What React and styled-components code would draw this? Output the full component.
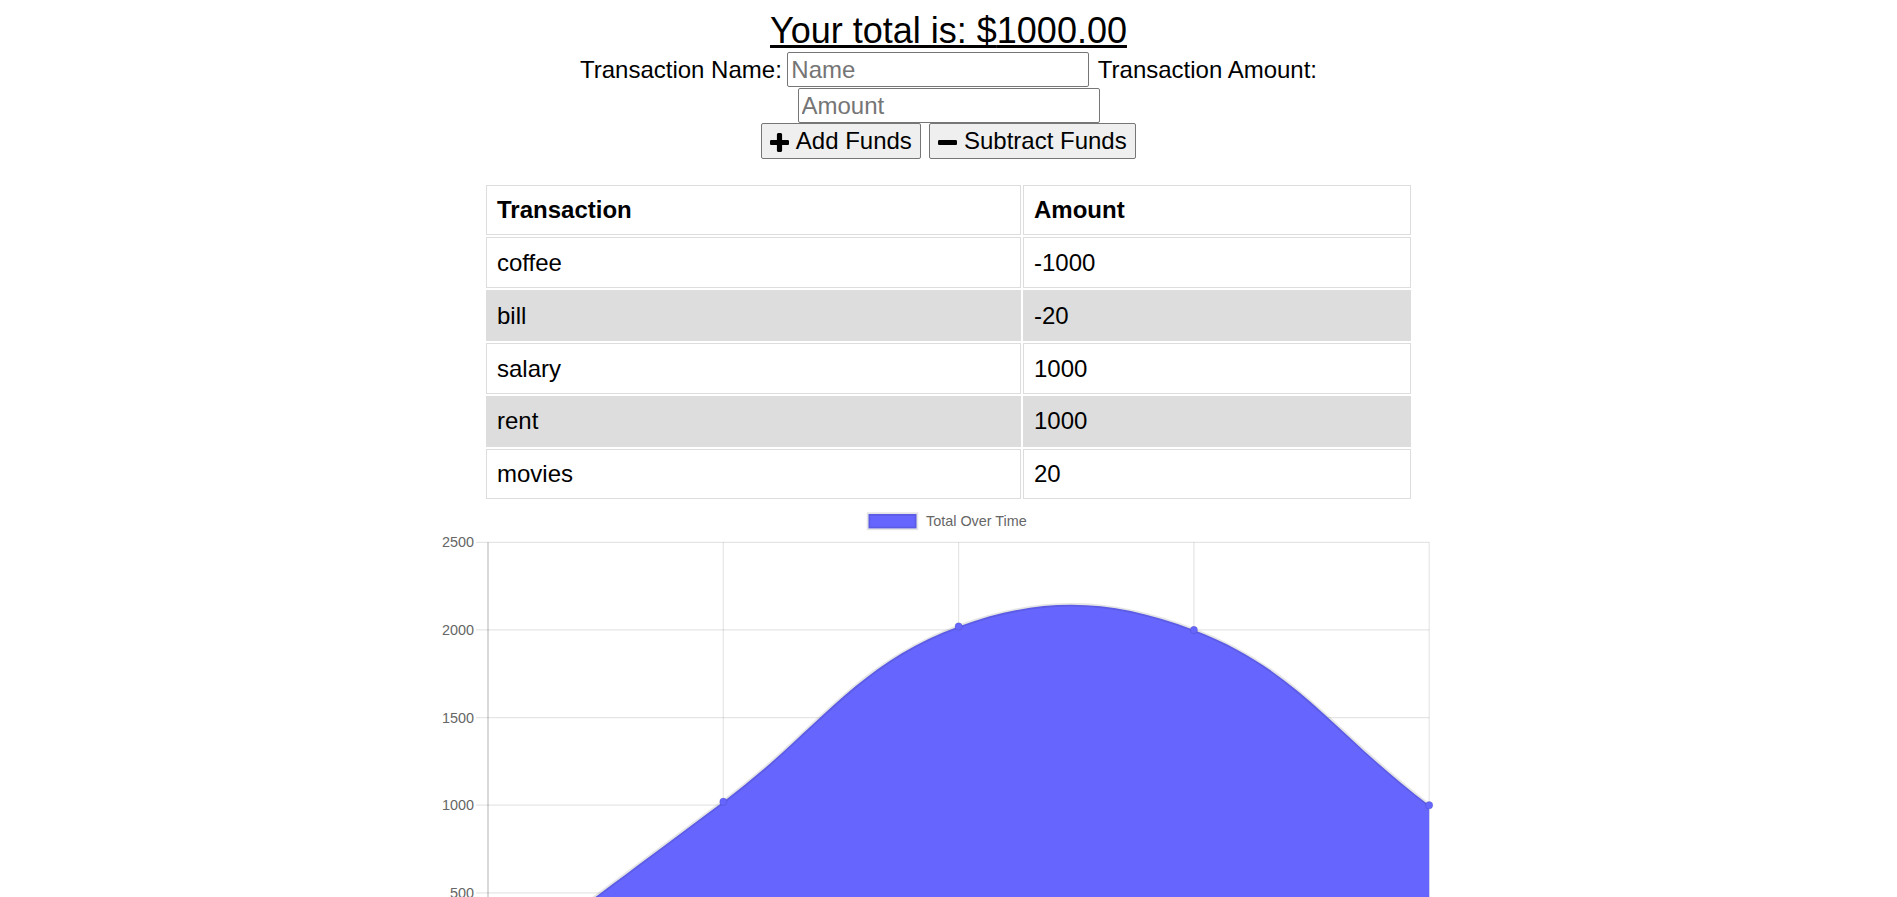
import React from 'react';
import styled, { createGlobalStyle } from 'styled-components';

const GlobalStyle = createGlobalStyle`
	body {
		margin: 0;
		background: #fff;
		color: #000;
		font-family: "Liberation Sans", Arial, sans-serif;
		font-size: 24px;
	}
`;

const Page = styled.div`
	display: flex;
	flex-direction: column;
	align-items: center;
	padding-top: 10px;
`;

const Title = styled.h1`
	margin: 0;
	font-size: 36px;
	font-weight: normal;
	line-height: 42px;
	text-decoration: underline;
`;

const FormRow = styled.div`
	display: flex;
	align-items: flex-start;
	justify-content: center;
	height: ${(p) => p.$h}px;
	gap: ${(p) => p.$gap || 0}px;
`;

const Label = styled.span`
	line-height: 35px;
	margin-left: ${(p) => p.$ml || 0}px;
	margin-right: ${(p) => p.$mr || 0}px;
`;

const TextInput = styled.input`
	box-sizing: border-box;
	width: 302px;
	height: 35px;
	padding: 0 3px;
	border: 1px solid #767676;
	border-radius: 2px;
	font-family: inherit;
	font-size: 24px;
	color: #000;
	background: #fff;
	&::placeholder {
		color: #757575;
	}
`;

const FundButton = styled.button`
	box-sizing: border-box;
	display: flex;
	align-items: center;
	height: 36px;
	padding: 0 8.5px;
	border: 1px solid #767676;
	border-radius: 2px;
	background: #efefef;
	color: #000;
	font-family: inherit;
	font-size: 24px;
	cursor: pointer;
	svg {
		margin-right: 6.5px;
		margin-top: 2px;
	}
`;

const Table = styled.table`
	margin-top: 23.6px;
	width: 929px;
	table-layout: fixed;
	border-collapse: separate;
	border-spacing: 2px;
	tbody tr:nth-child(even) td {
		background: #ddd;
	}
`;

const Cell = styled.td`
	box-sizing: border-box;
	height: 50.8px;
	border: 1px solid #ddd;
	padding: 0 10px;
	line-height: 27.6px;
	font-weight: ${(p) => (p.$head ? 'bold' : 'normal')};
	text-align: left;
	vertical-align: middle;
`;

const ChartBox = styled.div`
	width: 1038px;
	margin-top: 0.5px;
	svg {
		display: block;
		font-family: "Liberation Sans", Arial, sans-serif;
	}
`;

const PlusIcon = () => (
	<svg width="19" height="19" viewBox="192 128 1408 1408">
		<path d="M1600 736v192q0 40-28 68t-68 28h-416v416q0 40-28 68t-68 28h-192q-40 0-68-28t-28-68v-416h-416q-40 0-68-28t-28-68v-192q0-40 28-68t68-28h416v-416q0-40 28-68t68-28h192q40 0 68 28t28 68v416h416q40 0 68 28t28 68z" />
	</svg>
);

const MinusIcon = () => (
	<svg width="19" height="19" viewBox="192 128 1408 1408">
		<path d="M1600 736v192q0 40-28 68t-68 28h-1216q-40 0-68-28t-28-68v-192q0-40 28-68t68-28h1216q40 0 68 28t28 68z" />
	</svg>
);

const transactions = [
	{ name: 'coffee', value: -1000 },
	{ name: 'bill', value: -20 },
	{ name: 'salary', value: 1000 },
	{ name: 'rent', value: 1000 },
	{ name: 'movies', value: 20 },
];

// chart.js style spline (tension 0.4)
function controlPoints(prev, cur, next, t) {
	const d01 = Math.hypot(cur.x - prev.x, cur.y - prev.y);
	const d12 = Math.hypot(next.x - cur.x, next.y - cur.y);
	let s01 = d01 / (d01 + d12);
	let s12 = d12 / (d01 + d12);
	s01 = isNaN(s01) ? 0 : s01;
	s12 = isNaN(s12) ? 0 : s12;
	const fa = t * s01;
	const fb = t * s12;
	return {
		prev: { x: cur.x - fa * (next.x - prev.x), y: cur.y - fa * (next.y - prev.y) },
		next: { x: cur.x + fb * (next.x - prev.x), y: cur.y + fb * (next.y - prev.y) },
	};
}

const TotalChart = ({ data }) => {
	const left = 58;
	const step = 235.3;
	const top = 40.3;
	const scale = 0.17525;
	const yOf = (v) => top + (2500 - v) * scale;
	const base = yOf(0);
	const right = left + step * (data.length - 1);
	const pts = data.map((v, i) => ({ x: left + step * i, y: yOf(v) }));
	const cps = pts.map((p, i) => {
		const c = controlPoints(pts[i - 1] || p, p, pts[i + 1] || p, 0.4);
		const cap = (q) => ({ x: Math.min(Math.max(q.x, left), right), y: Math.min(Math.max(q.y, top), base) });
		return { prev: cap(c.prev), next: cap(c.next) };
	});
	let line = `M${pts[0].x},${pts[0].y}`;
	for (let i = 1; i < pts.length; i++) {
		const a = cps[i - 1].next;
		const b = cps[i].prev;
		line += ` C${a.x},${a.y} ${b.x},${b.y} ${pts[i].x},${pts[i].y}`;
	}
	const area = `${line} L${right},${base} L${left},${base} Z`;
	const ticks = [2500, 2000, 1500, 1000, 500, 0];

	return (
		<svg width="1038" height="520">
			<rect x="438.5" y="12" width="48" height="14.4" fill="#6666ff" stroke="rgba(0,0,0,0.1)" strokeWidth="3.6" />
			<text x="496" y="19.2" fontSize="14.4" fill="#666" dominantBaseline="central">
				Total Over Time
			</text>
			{ticks.map((t) => (
				<g key={t}>
					<line x1={left - 12} x2={right} y1={yOf(t)} y2={yOf(t)} stroke={t === 0 ? 'rgba(0,0,0,0.25)' : 'rgba(0,0,0,0.1)'} strokeWidth="1.2" />
					<text x="44" y={yOf(t)} fontSize="14.4" fill="#666" textAnchor="end" dominantBaseline="central">
						{t}
					</text>
				</g>
			))}
			{pts.map((p, i) => (
				<line key={i} x1={p.x} x2={p.x} y1={top} y2={base + 12} stroke={i === 0 ? 'rgba(0,0,0,0.25)' : 'rgba(0,0,0,0.1)'} strokeWidth="1.2" />
			))}
			<path d={area} fill="#6666ff" />
			<path d={line} fill="none" stroke="rgba(0,0,0,0.1)" strokeWidth="3.6" />
			{pts.map((p, i) => (
				<circle key={i} cx={p.x} cy={p.y} r="3.6" fill="#6666ff" stroke="rgba(0,0,0,0.1)" strokeWidth="1.2" />
			))}
		</svg>
	);
};

export default function App() {
	const total = transactions.reduce((s, t) => s + t.value, 0);
	const running = [];
	[...transactions].reverse().reduce((s, t) => {
		running.push(s + t.value);
		return s + t.value;
	}, 0);

	return (
		<Page>
			<GlobalStyle />
			<Title>Your total is: ${total.toFixed(2)}</Title>
			<FormRow $h={36}>
				<Label $mr={5.5}>Transaction Name:</Label>
				<TextInput type="text" placeholder="Name" />
				<Label $ml={8.5}>Transaction Amount:</Label>
			</FormRow>
			<FormRow $h={35}>
				<TextInput type="number" placeholder="Amount" />
			</FormRow>
			<FormRow $h={36} $gap={7.6}>
				<FundButton>
					<PlusIcon />
					Add Funds
				</FundButton>
				<FundButton>
					<MinusIcon />
					Subtract Funds
				</FundButton>
			</FormRow>
			<Table>
				<colgroup>
					<col style={{ width: 535 }} />
					<col />
				</colgroup>
				<thead>
					<tr>
						<Cell as="th" $head>Transaction</Cell>
						<Cell as="th" $head>Amount</Cell>
					</tr>
				</thead>
				<tbody>
					{transactions.map((t) => (
						<tr key={t.name}>
							<Cell>{t.name}</Cell>
							<Cell>{t.value}</Cell>
						</tr>
					))}
				</tbody>
			</Table>
			<ChartBox>
				<TotalChart data={running} />
			</ChartBox>
		</Page>
	);
}
